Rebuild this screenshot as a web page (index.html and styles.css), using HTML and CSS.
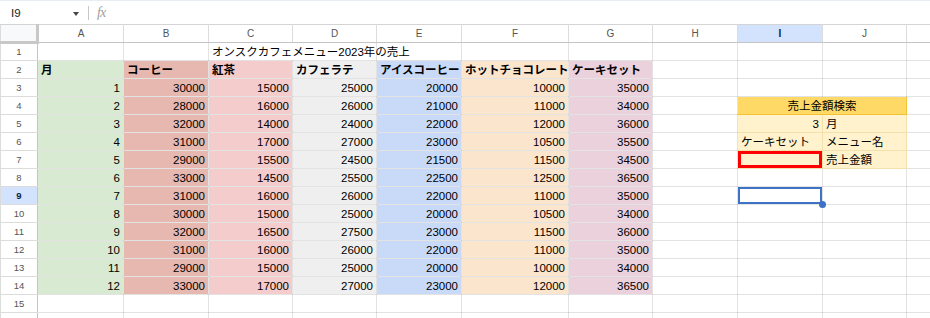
FILE: index.html
```html
<!DOCTYPE html>
<html lang="ja">
<head>
    <meta charset="UTF-8">
    <title>オンスクカフェメニュー売上</title>
    <link rel="stylesheet" href="styles.css">
</head>
<body>
<div class="formula-bar">
    <div class="name-box">
        <span class="cell-ref">I9</span>
        <span class="caret"></span>
    </div>
    <span class="divider"></span>
    <span class="fx">fx</span>
</div>

<table class="sheet">
    <colgroup>
        <col class="w-hdr">
        <col class="w-a"><col class="w-b"><col class="w-c"><col class="w-d">
        <col class="w-e"><col class="w-f"><col class="w-g"><col class="w-h">
        <col class="w-i"><col class="w-j"><col class="w-k">
    </colgroup>
    <thead>
    <tr>
        <th class="corner"></th>
        <th>A</th><th>B</th><th>C</th><th>D</th><th>E</th><th>F</th>
        <th>G</th><th>H</th><th class="sel">I</th><th>J</th><th></th>
    </tr>
    </thead>
    <tbody>
    <tr>
        <th>1</th>
        <td></td><td></td>
        <td colspan="2" class="title">オンスクカフェメニュー2023年の売上</td>
        <td></td><td></td><td></td><td></td><td></td><td></td><td></td>
    </tr>
    <tr class="rec head">
        <th>2</th>
        <td>月</td><td>コーヒー</td><td>紅茶</td><td>カフェラテ</td>
        <td>アイスコーヒー</td><td>ホットチョコレート</td><td>ケーキセット</td>
        <td></td><td></td><td></td><td></td>
    </tr>
    <tr class="rec">
        <th>3</th>
        <td class="num">1</td><td class="num">30000</td><td class="num">15000</td><td class="num">25000</td>
        <td class="num">20000</td><td class="num">10000</td><td class="num">35000</td>
        <td></td><td></td><td></td><td></td>
    </tr>
    <tr class="rec">
        <th>4</th>
        <td class="num">2</td><td class="num">28000</td><td class="num">16000</td><td class="num">26000</td>
        <td class="num">21000</td><td class="num">11000</td><td class="num">34000</td>
        <td></td><td colspan="2" class="panel-head">売上金額検索</td><td></td>
    </tr>
    <tr class="rec">
        <th>5</th>
        <td class="num">3</td><td class="num">32000</td><td class="num">14000</td><td class="num">24000</td>
        <td class="num">22000</td><td class="num">12000</td><td class="num">36000</td>
        <td></td><td class="panel num">3</td><td class="panel">月</td><td></td>
    </tr>
    <tr class="rec">
        <th>6</th>
        <td class="num">4</td><td class="num">31000</td><td class="num">17000</td><td class="num">27000</td>
        <td class="num">23000</td><td class="num">10500</td><td class="num">35500</td>
        <td></td><td class="panel">ケーキセット</td><td class="panel">メニュー名</td><td></td>
    </tr>
    <tr class="rec">
        <th>7</th>
        <td class="num">5</td><td class="num">29000</td><td class="num">15500</td><td class="num">24500</td>
        <td class="num">21500</td><td class="num">11500</td><td class="num">34500</td>
        <td></td><td class="panel result"></td><td class="panel">売上金額</td><td></td>
    </tr>
    <tr class="rec">
        <th>8</th>
        <td class="num">6</td><td class="num">33000</td><td class="num">14500</td><td class="num">25500</td>
        <td class="num">22500</td><td class="num">12500</td><td class="num">36500</td>
        <td></td><td></td><td></td><td></td>
    </tr>
    <tr class="rec">
        <th class="sel">9</th>
        <td class="num">7</td><td class="num">31000</td><td class="num">16000</td><td class="num">26000</td>
        <td class="num">22000</td><td class="num">11000</td><td class="num">35000</td>
        <td></td><td class="active"></td><td></td><td></td>
    </tr>
    <tr class="rec">
        <th>10</th>
        <td class="num">8</td><td class="num">30000</td><td class="num">15000</td><td class="num">25000</td>
        <td class="num">20000</td><td class="num">10500</td><td class="num">34000</td>
        <td></td><td></td><td></td><td></td>
    </tr>
    <tr class="rec">
        <th>11</th>
        <td class="num">9</td><td class="num">32000</td><td class="num">16500</td><td class="num">27500</td>
        <td class="num">23000</td><td class="num">11500</td><td class="num">36000</td>
        <td></td><td></td><td></td><td></td>
    </tr>
    <tr class="rec">
        <th>12</th>
        <td class="num">10</td><td class="num">31000</td><td class="num">16000</td><td class="num">26000</td>
        <td class="num">22000</td><td class="num">11000</td><td class="num">35000</td>
        <td></td><td></td><td></td><td></td>
    </tr>
    <tr class="rec">
        <th>13</th>
        <td class="num">11</td><td class="num">29000</td><td class="num">15000</td><td class="num">25000</td>
        <td class="num">20000</td><td class="num">10000</td><td class="num">34000</td>
        <td></td><td></td><td></td><td></td>
    </tr>
    <tr class="rec">
        <th>14</th>
        <td class="num">12</td><td class="num">33000</td><td class="num">17000</td><td class="num">27000</td>
        <td class="num">23000</td><td class="num">12000</td><td class="num">36500</td>
        <td></td><td></td><td></td><td></td>
    </tr>
    <tr>
        <th>15</th>
        <td></td><td></td><td></td><td></td><td></td><td></td><td></td>
        <td></td><td></td><td></td><td></td>
    </tr>
    <tr>
        <th></th>
        <td></td><td></td><td></td><td></td><td></td><td></td><td></td>
        <td></td><td></td><td></td><td></td>
    </tr>
    </tbody>
</table>
</body>
</html>
```

FILE: styles.css
```css
@charset "UTF-8";
/* reset */
html,body,table,th,td{margin:0;padding:0}
body{
    width:930px;
    height:318px;
    overflow:hidden;
    background:#fff;
    font:11.5px/14px "Liberation Sans", Arial, "Noto Sans CJK JP", sans-serif;
    color:#000;
}

/* formula bar */
.formula-bar{
    height:24px;
    display:flex;
    align-items:center;
    border-top:1px solid #e8ecf4;
    box-sizing:border-box;
}
.name-box{
    width:88px;
    display:flex;
    align-items:center;
    justify-content:space-between;
    padding:0 9px 0 11px;
    box-sizing:border-box;
}
.cell-ref{
    font-size:11.5px;
    color:#222;
}
.caret{
    width:0;
    height:0;
    border-left:3.5px solid transparent;
    border-right:3.5px solid transparent;
    border-top:4px solid #444;
    margin-top:2px;
}
.divider{
    width:1px;
    height:14px;
    background:#c7c7c7;
}
.fx{
    margin-left:8px;
    font:italic 14px "Liberation Serif", serif;
    color:#a0a0a0;
    letter-spacing:-1px;
}

/* grid */
.sheet{
    border-collapse:collapse;
    table-layout:fixed;
    width:991px;
}
.w-hdr{width:37px}
.w-a{width:86px}
.w-b{width:85px}
.w-c{width:84px}
.w-d{width:84px}
.w-e{width:85px}
.w-f{width:107px}
.w-g{width:84px}
.w-h{width:85px}
.w-i{width:85px}
.w-j{width:84px}
.w-k{width:85px}

.sheet tr{height:18px}
.sheet th{
    font-weight:normal;
    font-size:9.5px;
    color:#555;
    background:#fff;
    border:1px solid #dcdcdc;
    text-align:center;
    vertical-align:middle;
}
.sheet thead th{
    font-size:10px;
    border-top:1px solid #d4d4d4;
    border-bottom:1px solid #c4c4c4;
}
.sheet tbody th{
    border-right:1px solid #c4c4c4;
}
.sheet thead th.corner{
    background:#f8f9fa;
    border-right:3px solid #c8c8c8;
    border-bottom:3px solid #c8c8c8;
}
.sheet th.sel{
    background:#d3e3fd;
    color:#0b1f44;
    font-weight:bold;
}

.sheet td{
    border:1px solid rgba(0,0,0,0.11);
    padding:0 3px 1px;
    vertical-align:bottom;
    white-space:nowrap;
    overflow:hidden;
}
.sheet td.num{text-align:right}
.sheet td.title{overflow:visible}

/* column colours */
.rec td:nth-of-type(1){background:#d9ead3}
.rec td:nth-of-type(2){background:#e6b8af}
.rec td:nth-of-type(3){background:#f4cccc}
.rec td:nth-of-type(4){background:#efefef}
.rec td:nth-of-type(5){background:#c9daf8}
.rec td:nth-of-type(6){background:#fce5cd}
.rec td:nth-of-type(7){background:#ead1dc}
.head td{font-weight:bold}

/* search panel */
.sheet td.panel-head{
    background:#ffd966;
    border:1px solid #f1c232;
    text-align:center;
}
.sheet td.panel{
    background:#fff2cc;
    border-color:#f3e1ac;
}
.sheet td.result{
    box-shadow:inset 0 0 0 3px #ff0000;
}

/* active cell */
.sheet td.active{
    position:relative;
    overflow:visible;
    box-shadow:inset 0 0 0 2px #3d72c4;
}
.sheet td.active::after{
    content:"";
    position:absolute;
    right:-4px;
    bottom:-4px;
    width:7px;
    height:7px;
    border-radius:50%;
    background:#3d72c4;
    z-index:1;
}
```
